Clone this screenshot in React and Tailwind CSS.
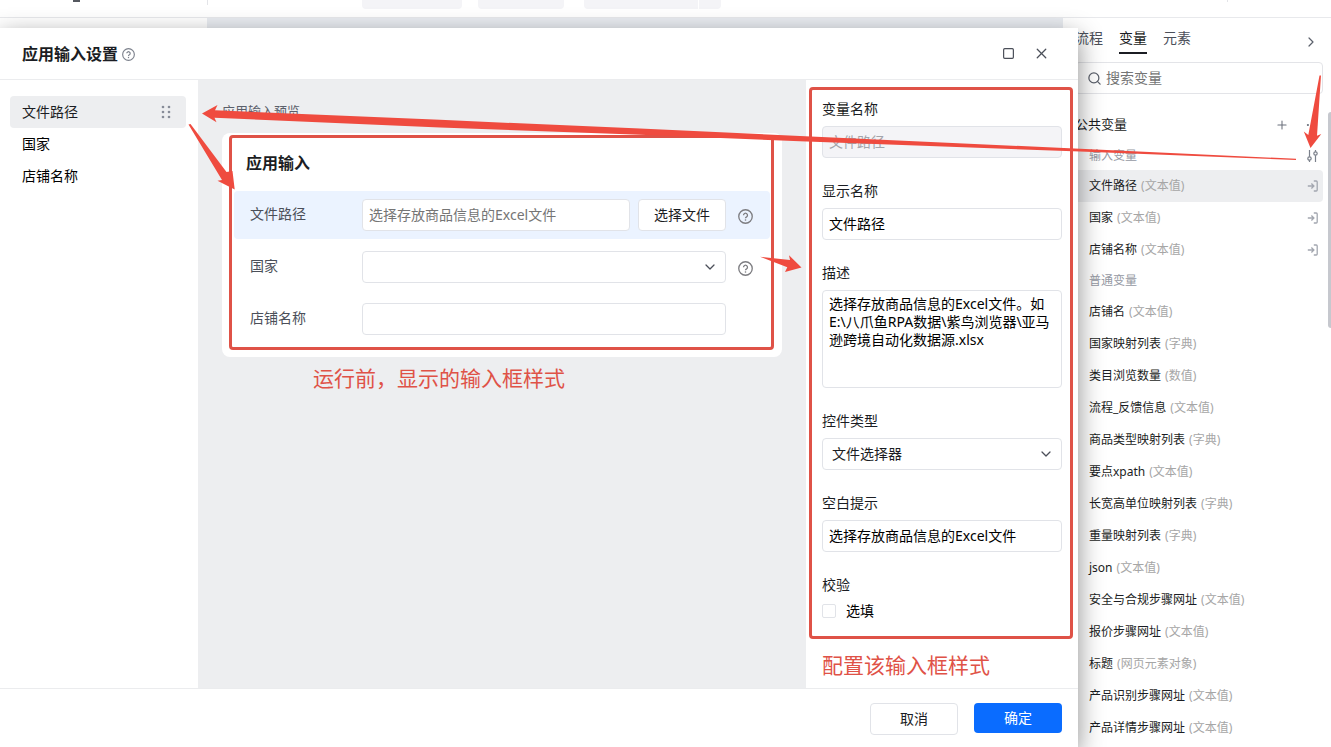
import { ChevronDown, ChevronRight, Ellipsis, Plus, Search, Square, X } from "lucide-react";

const INPUTS = ["文件路径", "国家", "店铺名称"];

const INPUT_VARS = [
  { name: "文件路径", type: "文本值", active: true },
  { name: "国家", type: "文本值" },
  { name: "店铺名称", type: "文本值" },
];

const NORMAL_VARS = [
  { name: "店铺名", type: "文本值" },
  { name: "国家映射列表", type: "字典" },
  { name: "类目浏览数量", type: "数值" },
  { name: "流程_反馈信息", type: "文本值" },
  { name: "商品类型映射列表", type: "字典" },
  { name: "要点xpath", type: "文本值" },
  { name: "长宽高单位映射列表", type: "字典" },
  { name: "重量映射列表", type: "字典" },
  { name: "json", type: "文本值" },
  { name: "安全与合规步骤网址", type: "文本值" },
  { name: "报价步骤网址", type: "文本值" },
  { name: "标题", type: "网页元素对象" },
  { name: "产品识别步骤网址", type: "文本值" },
  { name: "产品详情步骤网址", type: "文本值" },
];

function HelpIcon({ className }) {
  return (
    <svg viewBox="0 0 16 16" fill="none" stroke="currentColor" className={className} aria-hidden="true">
      <circle cx="8" cy="8" r="7.2" strokeWidth="1.4" />
      <path d="M5.9 6.6a2.1 2.1 0 1 1 3.2 1.8c-.7.4-1.1.8-1.1 1.5" strokeWidth="1.4" />
      <circle cx="8" cy="11.7" r=".85" fill="currentColor" stroke="none" />
    </svg>
  );
}

function DragIcon() {
  return (
    <svg viewBox="0 0 10 14" className="w-[10px] h-[14px] fill-[#878c98]" aria-hidden="true">
      {[2, 7, 12].map((y) => (
        <g key={y}>
          <circle cx="2" cy={y} r="1.3" />
          <circle cx="8" cy={y} r="1.3" />
        </g>
      ))}
    </svg>
  );
}

function EnterIcon() {
  return (
    <svg viewBox="0 0 12 12" fill="none" stroke="#a3a7b0" strokeWidth="1.3" className="w-3 h-3" aria-hidden="true">
      <path d="M6.8 1H9.2a1 1 0 0 1 1 1v8a1 1 0 0 1-1 1H6.8" />
      <path d="M.8 6h6M4.4 3.5 6.9 6 4.4 8.5" />
    </svg>
  );
}

function SortIcon() {
  return (
    <svg viewBox="0 0 12 14" fill="none" stroke="#7b808b" strokeWidth="1.2" className="w-3 h-3.5" aria-hidden="true">
      <path d="M2.5 1v6.7M2.5 11.3V13M8.5 13V6.3M8.5 2.7V1" />
      <circle cx="2.5" cy="9.5" r="1.7" />
      <circle cx="8.5" cy="4.5" r="1.7" />
    </svg>
  );
}

function TopBar() {
  return (
    <header className="flex justify-between h-[18px] border-b border-[#e8e9ec] bg-white">
      <div className="flex items-start">
        <div className="flex w-[208px] h-[5px] pl-[73px] border-r border-[#e3e4e8]">
          <span className="w-[7px] h-0.5 bg-[#55585f]" />
        </div>
        <div className="flex ml-[154px] gap-4">
          <span className="w-[100px] h-[9px] rounded-b bg-[#f4f4f7]" />
          <span className="w-[86px] h-[9px] rounded-b bg-[#f4f4f7]" />
          <span className="flex ml-1 gap-px">
            <span className="w-[114px] h-[9px] rounded-bl bg-[#f4f4f7]" />
            <span className="w-[22px] h-[9px] rounded-br bg-[#f4f4f7]" />
          </span>
        </div>
      </div>
      <span className="w-px h-0.5 mr-[103px] bg-[#e3e4e8]" />
    </header>
  );
}

function VariableRow({ item, icon }) {
  return (
    <li
      className={
        item.active
          ? "flex items-center justify-between h-8 pl-[14px] pr-1 rounded bg-[#edeef0]"
          : "flex items-center justify-between h-8 pl-[14px] pr-1"
      }
    >
      <span className="flex gap-1 text-xs text-[#1b1d23]">
        {item.name}
        <span className="text-[#a6a6a6]">({item.type})</span>
      </span>
      {icon && <EnterIcon />}
    </li>
  );
}

function VariablePanel() {
  return (
    <aside className="relative w-[268px] pl-3 pr-2 bg-white">
      <nav className="flex items-start justify-between h-[44px] pt-2.5">
        <div className="flex gap-4 text-sm leading-5 text-[#4b4f59]">
          <button type="button" className="h-[26px] pb-1.5">流程</button>
          <button type="button" className="h-[26px] pb-1 border-b-2 border-[#1b1d23] text-[#1b1d23]">变量</button>
          <button type="button" className="h-[26px] pb-1.5">元素</button>
        </div>
        <button type="button" aria-label="收起" className="mt-1.5 mr-1">
          <ChevronRight size={16} strokeWidth={1.8} className="text-[#5b606b]" />
        </button>
      </nav>

      <label className="flex items-center gap-1 h-8 pl-[11px] border border-[#e3e4e8] rounded">
        <Search size={15} strokeWidth={2} className="text-[#5b606b]" />
        <input
          type="search"
          placeholder="搜索变量"
          aria-label="搜索变量"
          className="flex-1 min-w-0 text-sm leading-5 outline-none placeholder:text-[#757575]"
        />
      </label>

      <div className="flex items-center justify-between h-8 mt-[15px] pr-1">
        <h2 className="text-[13px] text-[#1b1d23]">公共变量</h2>
        <div className="flex gap-4 text-[#6b707c]">
          <button type="button" aria-label="新增">
            <Plus size={14} strokeWidth={1.8} />
          </button>
          <button type="button" aria-label="更多">
            <Ellipsis size={14} strokeWidth={1.8} />
          </button>
        </div>
      </div>

      <div className="flex items-center justify-between h-[29px] pl-[14px] pr-1">
        <h3 className="text-xs text-[#9599a3]">输入变量</h3>
        <button type="button" aria-label="输入设置">
          <SortIcon />
        </button>
      </div>
      <ul>
        {INPUT_VARS.map((item) => (
          <VariableRow key={item.name} item={item} icon />
        ))}
      </ul>
      <h3 className="flex items-center h-[30px] pl-[14px] text-xs text-[#9599a3]">普通变量</h3>
      <ul>
        {NORMAL_VARS.map((item) => (
          <VariableRow key={item.name} item={item} />
        ))}
      </ul>

      <span className="absolute right-0 top-[94px] w-[3px] h-[216px] rounded-l bg-[#c6c8ce]" />
    </aside>
  );
}

function PreviewCard() {
  return (
    <div className="relative mt-3 px-3 pb-[14px] rounded-lg bg-white">
      <h3 className="h-[58px] pl-3 leading-[60px] text-base font-bold text-[#1b1d23]">应用输入</h3>
      <div className="flex flex-col gap-1 text-sm text-[#4b4f59]">
        <div className="flex items-center h-12 pl-4 pr-[17px] rounded bg-[#ebf3ff]">
          <label htmlFor="file-path" className="w-28 shrink-0 pb-0.5">文件路径</label>
          <input
            id="file-path"
            placeholder="选择存放商品信息的Excel文件"
            className="flex-1 min-w-0 h-8 px-1.5 pb-0.5 border border-[#e1e3e8] rounded bg-white placeholder:text-[#757575]"
          />
          <button type="button" className="w-[88px] h-8 ml-2 border border-[#e1e3e8] rounded bg-white text-[#1b1d23]">
            选择文件
          </button>
          <HelpIcon className="w-[15px] h-[15px] ml-3 mt-0.5 text-[#7c7c80]" />
        </div>
        <div className="flex items-center h-12 pl-4 pr-[17px]">
          <label htmlFor="country" className="w-28 shrink-0 pb-0.5">国家</label>
          <div className="relative flex-1">
            <select id="country" className="block w-full h-8 border border-[#e1e3e8] rounded bg-white appearance-none" />
            <ChevronDown size={16} strokeWidth={1.9} className="absolute right-2 top-2 text-[#4b4f59] pointer-events-none" />
          </div>
          <HelpIcon className="w-[15px] h-[15px] ml-3 mt-0.5 text-[#7c7c80]" />
        </div>
        <div className="flex items-center h-12 pl-4 pr-11">
          <label htmlFor="shop" className="w-28 shrink-0 pb-0.5">店铺名称</label>
          <input id="shop" className="flex-1 min-w-0 h-8 px-1.5 border border-[#e1e3e8] rounded bg-white" />
        </div>
      </div>
      <div className="absolute left-[7px] right-2 top-0.5 bottom-[7px] border-3 border-[#df5247] rounded-sm pointer-events-none" />
    </div>
  );
}

function Field({ label, id, children }) {
  return (
    <div className="flex flex-col gap-1.5">
      <label htmlFor={id} className="leading-[22px] text-[#1b1d23]">{label}</label>
      {children}
    </div>
  );
}

function ConfigPanel() {
  return (
    <section className="relative w-[272px] shrink-0 px-4 pt-[18px] text-sm">
      <div className="flex flex-col gap-[22px]">
        <Field label="变量名称" id="var-name">
          <input
            id="var-name"
            disabled
            defaultValue="文件路径"
            className="h-8 px-1.5 pb-0.5 border border-[#e1e3e8] rounded bg-[#f4f4f7] text-[#a3a5ab]"
          />
        </Field>
        <Field label="显示名称" id="display-name">
          <input id="display-name" defaultValue="文件路径" className="h-8 px-1.5 pb-0.5 border border-[#e1e3e8] rounded text-black" />
        </Field>
        <Field label="描述" id="description">
          <textarea
            id="description"
            defaultValue="选择存放商品信息的Excel文件。如E:\八爪鱼RPA数据\紫鸟浏览器\亚马逊跨境自动化数据源.xlsx"
            className="h-[98px] pl-1.5 pr-1 py-1 border border-[#e1e3e8] rounded leading-[18px] text-black resize-none"
          />
        </Field>
        <Field label="控件类型" id="control-type">
          <div className="relative">
            <select
              id="control-type"
              className="block w-full h-8 px-[9px] border border-[#e1e3e8] rounded bg-white text-[#1b1d23] appearance-none"
            >
              <option>文件选择器</option>
            </select>
            <ChevronDown size={16} strokeWidth={1.9} className="absolute right-2 top-2 text-[#4b4f59] pointer-events-none" />
          </div>
        </Field>
        <Field label="空白提示" id="placeholder">
          <input
            id="placeholder"
            defaultValue="选择存放商品信息的Excel文件"
            className="h-8 px-1.5 pb-0.5 border border-[#e1e3e8] rounded text-black"
          />
        </Field>
      </div>
      <fieldset className="mt-[22px]">
        <legend className="leading-[22px] text-[#1b1d23]">校验</legend>
        <label className="flex items-center gap-2.5 mt-1 leading-[22px] text-black">
          <input type="checkbox" className="w-[14px] h-[14px] border border-[#e1e3e8] rounded-xs bg-white appearance-none" />
          选填
        </label>
      </fieldset>
      <p className="mt-[27px] text-[21px] leading-8 text-[#df5247]">配置该输入框样式</p>
      <div className="absolute left-[3px] right-[5px] top-[7px] h-[552px] border-3 border-[#df5247] rounded-sm pointer-events-none" />
    </section>
  );
}

function InputDialog() {
  return (
    <div
      role="dialog"
      aria-label="应用输入设置"
      className="absolute left-0 right-[253px] top-7 bottom-0 flex flex-col bg-white shadow-[0_8px_24px_rgba(0,0,0,0.45)]"
    >
      <header className="flex items-center justify-between h-[52px] pl-[22px] pr-7 border-b border-[#ebecee]">
        <div className="flex items-center gap-1">
          <h1 className="text-base font-bold text-[#1b1d23]">应用输入设置</h1>
          <HelpIcon className="w-[13px] h-[13px] mt-0.5 text-[#7c818c]" />
        </div>
        <div className="flex items-center gap-[18px] text-[#4b4f59]">
          <button type="button" aria-label="最大化">
            <Square size={13} strokeWidth={2.2} />
          </button>
          <button type="button" aria-label="关闭">
            <X size={17} strokeWidth={1.8} />
          </button>
        </div>
      </header>

      <div className="flex flex-1">
        <aside className="w-[198px] shrink-0 pl-2.5 pr-3 pt-4">
          <ul className="text-sm text-black">
            {INPUTS.map((name, i) => (
              <li
                key={name}
                className={
                  i === 0
                    ? "flex items-center justify-between h-8 pl-3 pr-[15px] rounded bg-[#edeef0] text-[#1b1d23]"
                    : "flex items-center h-8 pl-3"
                }
              >
                {name}
                {i === 0 && <DragIcon />}
              </li>
            ))}
          </ul>
        </aside>

        <main className="flex-1 min-w-0 px-6 pt-[21px] bg-[#edeef0]">
          <h2 className="text-[13px] leading-5 text-[#5b606b]">应用输入预览</h2>
          <PreviewCard />
          <p className="mt-[5px] pl-[91px] text-[21px] leading-8 text-[#df5247]">运行前，显示的输入框样式</p>
        </main>

        <ConfigPanel />
      </div>

      <footer className="flex items-start justify-end gap-4 h-[59px] pt-[14px] pr-4 border-t border-[#ebecee] text-sm">
        <button type="button" className="w-[88px] h-8 border border-[#e1e3e8] rounded bg-white text-[#1b1d23]">取消</button>
        <button type="button" className="w-[88px] h-[30px] rounded bg-[#0a6cff] text-white">确定</button>
      </footer>
    </div>
  );
}

// Pointers that link the variable list, the preview and the settings column
function Arrows() {
  return (
    <svg className="absolute inset-0 w-full h-full pointer-events-none fill-[#ef4b3f]" aria-hidden="true">
      <path d="M202 113.5 217.5 105 215 110.3 440 119.8 640 128.6 800 136 1080 148.8 1296 158.8V160L1080 151.6 800 141.2 640 134.8 440 127.6 214.5 117.8 216.5 122.3Z" />
      <path d="M188.5 124.5 190.5 124 226.5 172 232.5 171 234.7 189.5 217.5 180.7 222 180Z" />
      <path d="M760 256.8 790 260 789 255.3 801.5 267.5 785 272 787.3 267.3Z" />
      <path d="M1319.5 75.5 1321 75.5 1317 135.8 1321.3 134 1310.5 148 1303.8 131.5 1308.3 135Z" />
    </svg>
  );
}

export default function App() {
  return (
    <div className="relative flex flex-col min-h-screen overflow-hidden bg-white font-['Noto_Sans','Noto_Sans_CJK_SC',sans-serif]">
      <TopBar />
      <div className="flex flex-1">
        <div className="w-[207px] bg-white" />
        <div className="flex-1 bg-[#e9ecf1]" />
        <VariablePanel />
      </div>
      <InputDialog />
      <Arrows />
    </div>
  );
}
